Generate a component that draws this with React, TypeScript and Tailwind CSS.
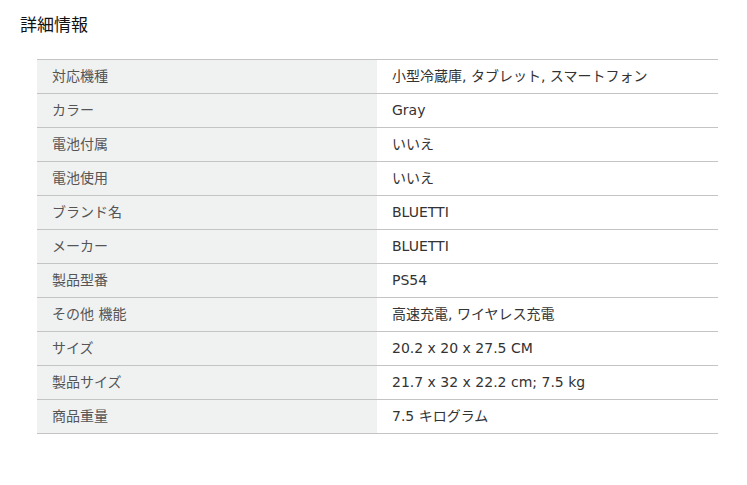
const rows: [string, string][] = [
  ["対応機種", "小型冷蔵庫, タブレット, スマートフォン"],
  ["カラー", "Gray"],
  ["電池付属", "いいえ"],
  ["電池使用", "いいえ"],
  ["ブランド名", "BLUETTI"],
  ["メーカー", "BLUETTI"],
  ["製品型番", "PS54"],
  ["その他 機能", "高速充電, ワイヤレス充電"],
  ["サイズ", "20.2 x 20 x 27.5 CM"],
  ["製品サイズ", "21.7 x 32 x 22.2 cm; 7.5 kg"],
  ["商品重量", "7.5 キログラム"],
];

export default function App() {
  return (
    <main
      className="h-[485px] w-[747px] bg-white"
      style={{ fontFamily: '"DejaVu Sans", "Noto Sans CJK JP", sans-serif' }}
    >
      <h2 className="pl-5 pt-[14px] text-[17px] leading-[22px] text-[#111]">詳細情報</h2>
      <table className="ml-[37px] mt-[23px] w-[681px] border-collapse text-[14px]">
        <tbody>
          {rows.map(([k, v]) => (
            <tr key={k} className="h-[34px] border-y border-[#c4c4c4]">
              <th className="w-[340px] bg-[#f0f2f2] pl-[15px] text-left font-normal text-[#555]">
                {k}
              </th>
              <td className="pl-[15px] text-[#333]">{v}</td>
            </tr>
          ))}
        </tbody>
      </table>
    </main>
  );
}
